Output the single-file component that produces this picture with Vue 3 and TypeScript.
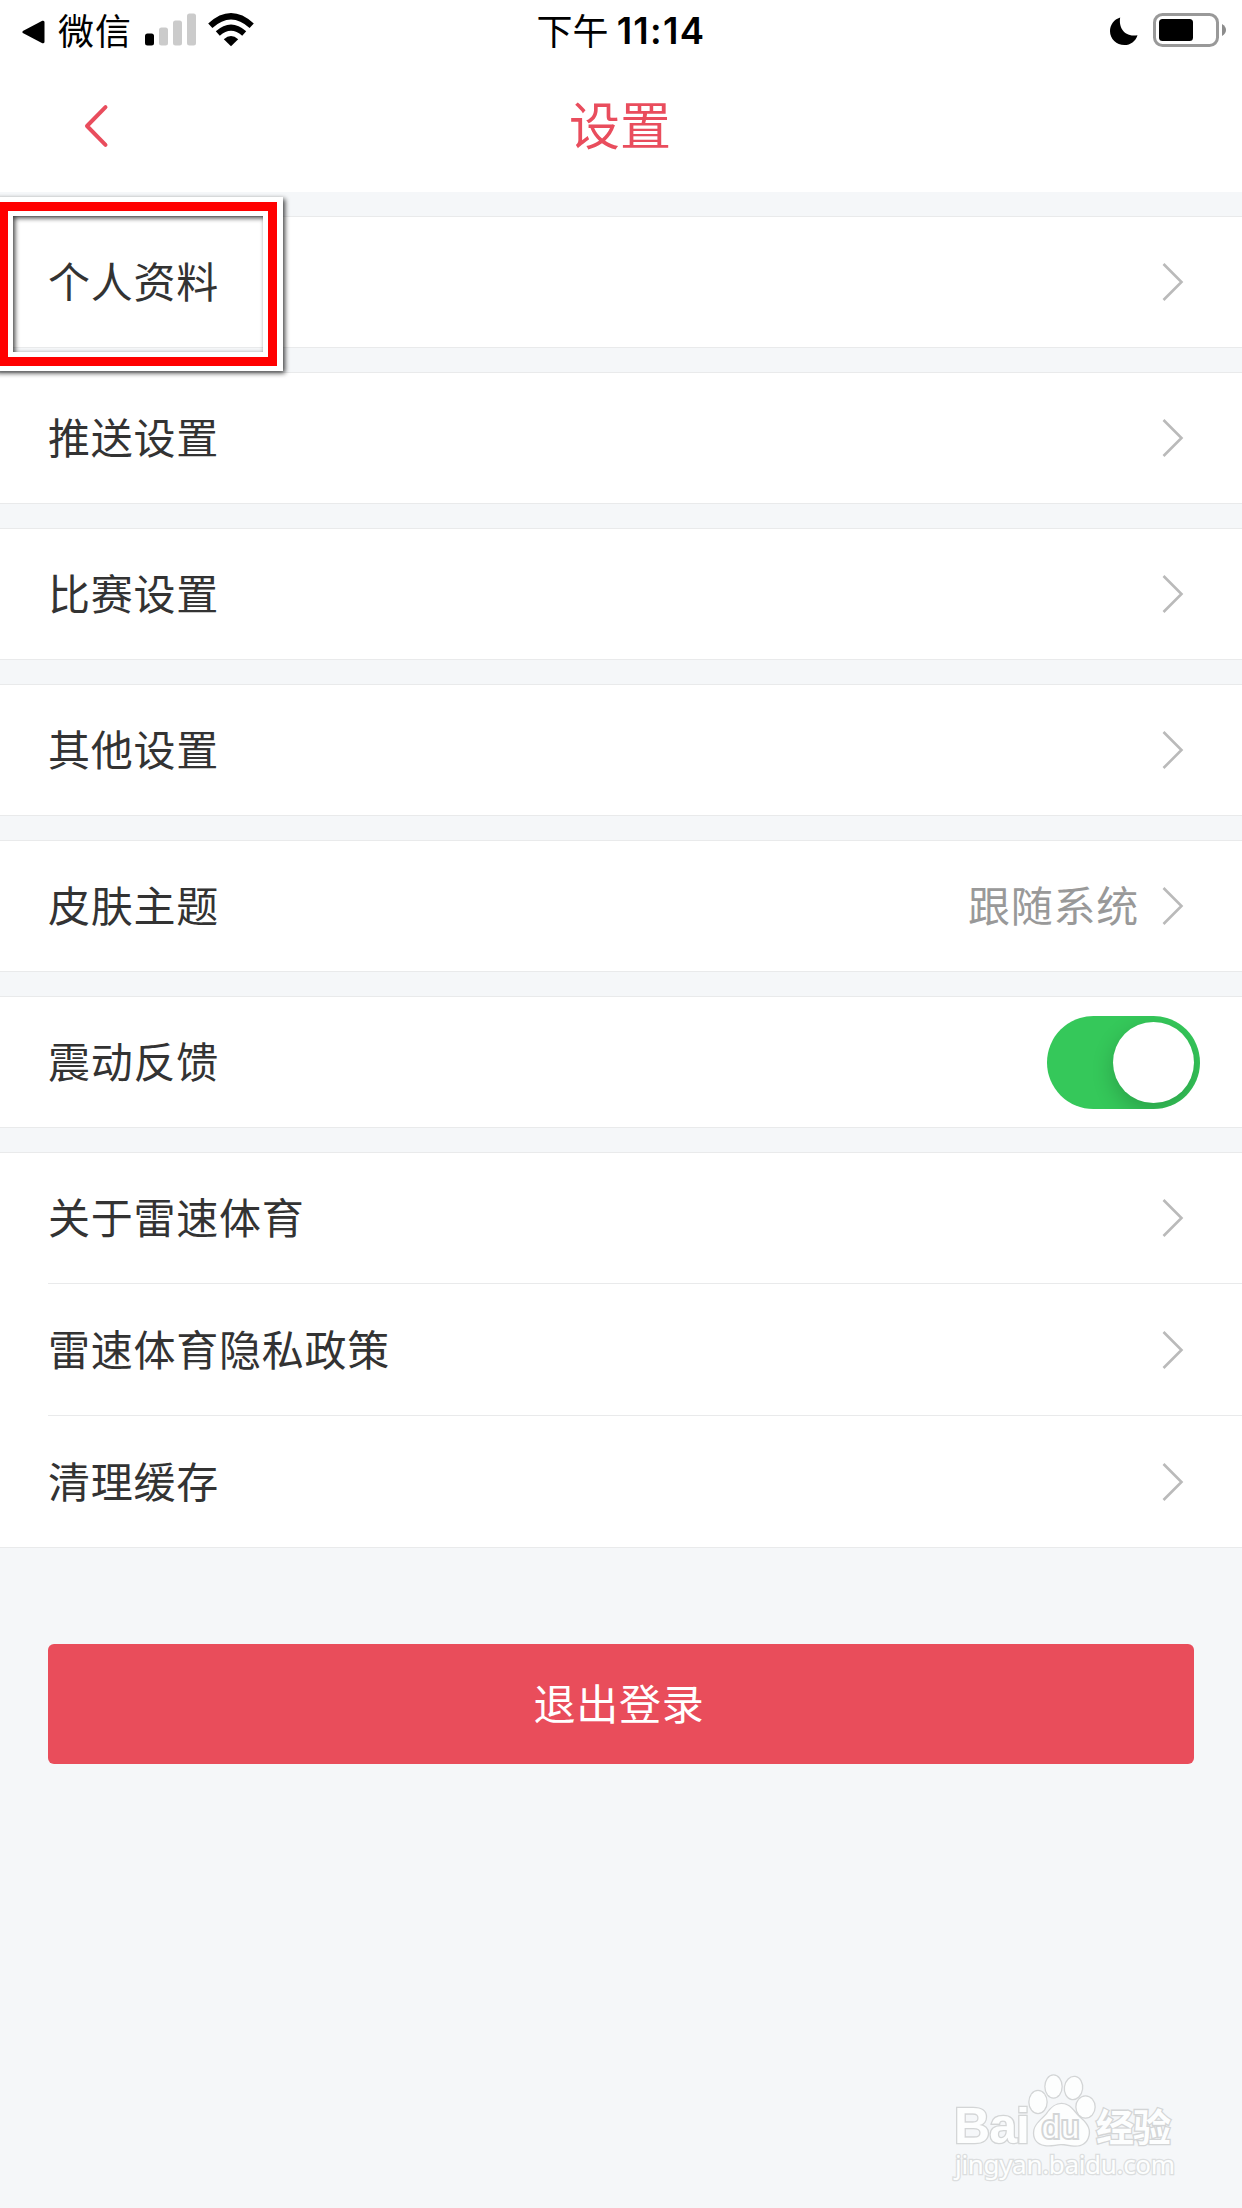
<script setup lang="ts">
interface Item {
  label: string
  value?: string
  toggle?: boolean
}

const groups: Item[][] = [
  [{ label: '个人资料' }],
  [{ label: '推送设置' }],
  [{ label: '比赛设置' }],
  [{ label: '其他设置' }],
  [{ label: '皮肤主题', value: '跟随系统' }],
  [{ label: '震动反馈', toggle: true }],
  [{ label: '关于雷速体育' }, { label: '雷速体育隐私政策' }, { label: '清理缓存' }],
]
</script>

<template>
  <div class="page">
    <header class="top">
      <div class="status">
        <div class="status-left">
          <svg class="back-app" width="24" height="24" viewBox="0 0 24 24">
            <path d="M2 12 21 2.200V21.800Z" stroke="#000" stroke-width="3" stroke-linejoin="round" />
          </svg>
          <span class="carrier">微信</span>
          <svg class="signal" width="52" height="34" viewBox="0 0 52 34">
            <rect x="0" y="20.500" width="9" height="12" rx="2.500" />
            <rect x="14" y="14.500" width="9" height="18" rx="2.500" fill="#cbcbcb" />
            <rect x="28" y="7.500" width="9" height="25" rx="2.500" fill="#cbcbcb" />
            <rect x="42" y="0.500" width="9" height="32" rx="2.500" fill="#cbcbcb" />
          </svg>
          <svg class="wifi" width="46" height="34" viewBox="0 0 46 34">
            <path d="M23 33.200 15.800 26.200Q23 19.600 30.200 26.200Z" />
            <path d="M9.800 20.600Q23 8.800 36.200 20.600" fill="none" stroke="#000" stroke-width="6" />
            <path d="M2.300 12.800Q23-6.200 43.700 12.800" fill="none" stroke="#000" stroke-width="6.200" />
          </svg>
        </div>
        <div class="clock"><span>下午</span><span class="digits">11:14</span></div>
        <div class="status-right">
          <svg class="moon" width="28" height="29" viewBox="0 0 28 29">
            <path d="M10.200.5C8.500 9.500 13.500 20.500 27.500 18.200C25.500 24.500 20.500 28 14.500 28C6.500 28 0 21.800 0 14.200C0 8 3.800 2.500 10.200.5Z" />
          </svg>
          <svg class="battery" width="74" height="34" viewBox="0 0 74 34">
            <rect x="1.500" y="1.500" width="63" height="31" rx="8" fill="none" stroke="#999" stroke-width="3" />
            <rect x="6" y="6" width="34" height="22" rx="3.500" />
            <path d="M69 11Q73 13.500 73 17T69 23Z" fill="#8c8c8c" />
          </svg>
        </div>
      </div>
      <div class="nav">
        <svg class="back" width="28" height="44" viewBox="0 0 28 44">
          <path d="M22.500 3.200 4 22 22.500 40.800" fill="none" stroke="#e94d5d" stroke-width="4" stroke-linecap="round" stroke-linejoin="round" />
        </svg>
        <h1 class="title">设置</h1>
      </div>
    </header>

    <main class="list">
      <section v-for="(group, i) in groups" :key="i" class="group">
        <div v-for="item in group" :key="item.label" class="row">
          <span class="label">{{ item.label }}</span>
          <span v-if="item.value" class="value">{{ item.value }}</span>
          <span v-if="item.toggle" class="toggle"><span class="knob"></span></span>
          <svg v-else class="arrow" width="22" height="40" viewBox="0 0 22 40">
            <path d="M1.500 2 19.500 20 1.500 38" fill="none" stroke="#bababa" stroke-width="2.600" />
          </svg>
        </div>
      </section>
    </main>

    <button class="logout">退出登录</button>

    <div class="marker"><div class="marker-red"><div class="marker-inner"></div></div></div>

    <svg class="watermark" width="240" height="120" viewBox="0 0 240 120">
      <g class="mark">
        <text x="4" y="73" class="bai" textLength="76">Bai</text>
        <ellipse cx="88" cy="32" rx="8.500" ry="11" />
        <ellipse cx="103.500" cy="16.500" rx="8" ry="11" />
        <ellipse cx="123.500" cy="18" rx="8.500" ry="11" transform="rotate(8 123.500 18)" />
        <ellipse cx="135.500" cy="37" rx="9" ry="10.500" />
        <path d="M111.500 34C120 34 123 41 129 47C136 53 140 58 138.500 65C137 73 131 76 124 75.500C118 75 116 74 111 74C106 74 101 76 95 75C87 74 83 68 84.500 60C86 53 92 50 97 44C101 38 105 34 111.500 34Z" />
        <text x="92" y="68" class="du" textLength="37">du</text>
        <text x="146" y="71" class="jy" textLength="75">经验</text>
        <text x="5" y="103.500" class="url" textLength="220">jingyan.baidu.com</text>
      </g>
    </svg>
  </div>
</template>

<style>
body {
  background: #f5f7f9;
}
</style>

<style scoped>
.page {
  position: relative;
  width: 1242px;
  height: 2208px;
  overflow: hidden;
  background: #f5f7f9;
  font-family: 'Noto Sans CJK SC', sans-serif;
  color: #333;
}
.top {
  height: 192px;
  background: #fff;
}
.status {
  display: grid;
  grid-template-columns: 1fr auto 1fr;
  align-items: center;
  height: 60px;
  color: #000;
  font-size: 36px;
  line-height: 60px;
}
.status-left,
.status-right {
  display: flex;
  align-items: center;
}
.status-left {
  padding-left: 22px;
}
.carrier {
  margin-left: 12px;
  padding-bottom: 2px;
  line-height: 58px;
  letter-spacing: 1px;
}
.back-app {
  margin-top: 3px;
}
.signal {
  margin-left: 13px;
}
.wifi {
  margin-left: 11px;
}
.clock {
  display: flex;
  line-height: 58px;
}
.digits {
  margin-left: 8px;
  padding-top: 2px;
  font-family: Inter, sans-serif;
  font-size: 36.5px;
  font-weight: 600;
  letter-spacing: 1.3px;
}
.status-right {
  justify-content: flex-end;
  padding-right: 15px;
}
.moon {
  margin-top: 2px;
}
.battery {
  margin-left: 15px;
}
.nav {
  display: grid;
  grid-template-columns: 1fr auto 1fr;
  align-items: center;
  height: 132px;
}
.back {
  margin-left: 83px;
}
.title {
  margin: 0;
  padding: 0 2px 5px 0;
  color: #e94d5d;
  font-size: 51px;
  font-weight: 400;
  line-height: 127px;
}
.list {
  display: flex;
  flex-direction: column;
  gap: 24px;
  padding-top: 24px;
}
.group {
  border-top: 1px solid #e9eaeb;
  border-bottom: 1px solid #e9eaeb;
  background: #fff;
}
.row {
  display: flex;
  align-items: center;
  height: 130px;
  padding-right: 58px;
  margin-left: 48px;
}
.row + .row {
  height: 131px;
  border-top: 1px solid #e9eaeb;
}
.label {
  flex: 1;
}
.label,
.value,
.logout {
  padding-bottom: 5px;
  font-size: 42px;
  letter-spacing: 0.75px;
}
.value {
  margin-right: 23px;
  color: #999;
}
.toggle {
  display: flex;
  justify-content: flex-end;
  box-sizing: border-box;
  width: 153px;
  height: 93px;
  margin-right: -16px;
  padding: 6px;
  border-radius: 47px;
  background: #35c85a;
  overflow: hidden;
}
.knob {
  width: 81px;
  height: 81px;
  border-radius: 50%;
  background: #fff;
  box-shadow: 0 8px 22px rgba(0, 0, 0, 0.2);
}
.logout {
  display: block;
  width: 1146px;
  height: 120px;
  margin: 96px 48px 0;
  padding: 0 4px 6px 0;
  border: 0;
  border-radius: 6px;
  background: #e94d5b;
  color: #fff;
  font-family: inherit;
}
.marker {
  position: absolute;
  left: -6px;
  top: 197px;
  box-sizing: border-box;
  width: 289px;
  height: 174px;
  border: 5px solid #fff;
  border-right-width: 6px;
  filter: drop-shadow(0 0 0.5px rgba(0, 0, 0, 0.5)) drop-shadow(2px 2px 2.5px rgba(0, 0, 0, 0.75));
}
.marker-red {
  box-sizing: border-box;
  height: 100%;
  border: 9px solid #f00;
}
.marker-inner {
  box-sizing: border-box;
  height: 100%;
  border: 5px solid #fff;
}
.watermark {
  position: absolute;
  left: 950px;
  top: 2070px;
}
.mark {
  fill: #fdfefe;
  stroke: #d3d5d6;
  stroke-width: 2.6px;
  paint-order: stroke;
}
.bai,
.du {
  font-family: 'Liberation Sans', sans-serif;
  font-weight: 700;
  font-size: 50px;
}
.du {
  font-size: 32px;
  font-weight: 400;
  stroke-width: 4px;
}
.jy {
  font-size: 38px;
  font-weight: 700;
}
.url {
  font-family: 'Noto Sans', sans-serif;
  font-size: 26px;
  stroke: #dcdedf;
}
</style>
